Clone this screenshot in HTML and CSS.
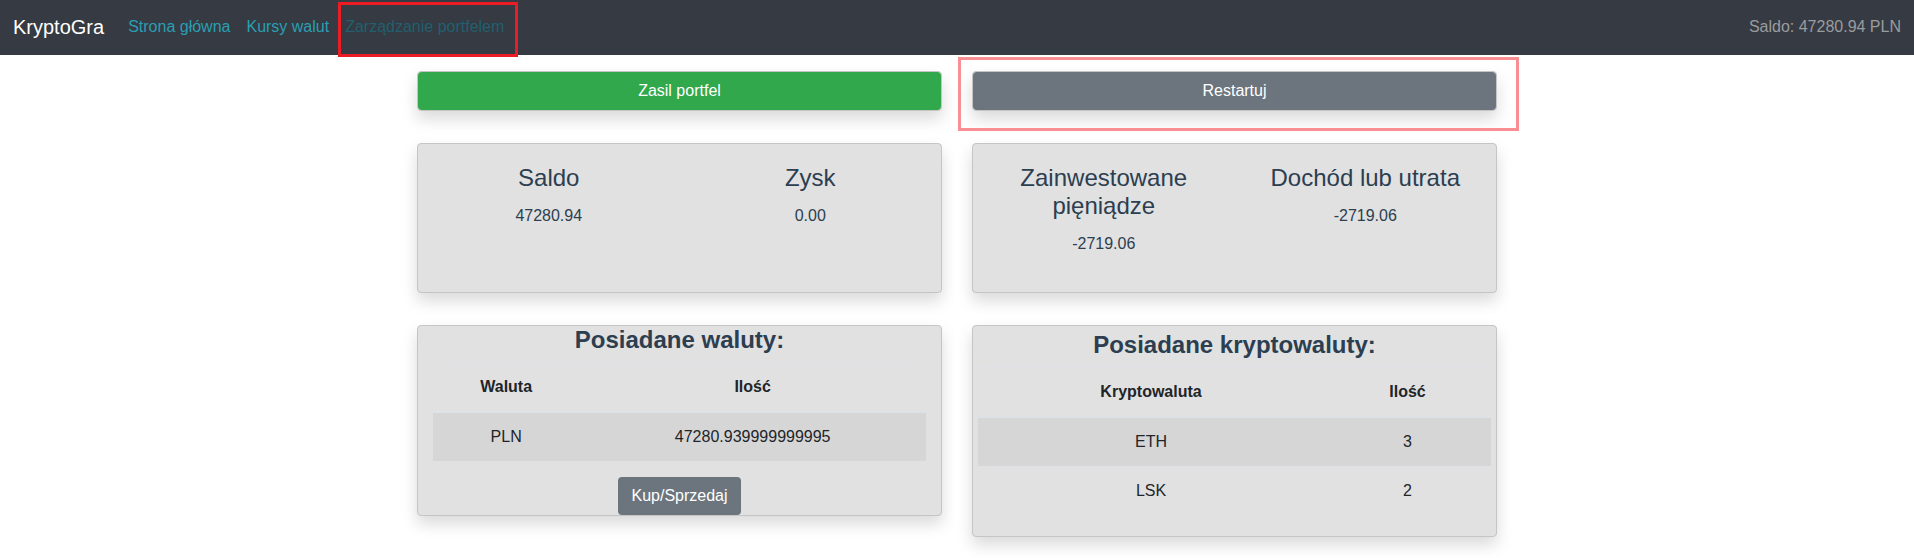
FILE: index.html
```html
<!DOCTYPE html>
<html lang="pl">
<head>
<meta charset="utf-8">
<meta name="viewport" content="width=device-width, initial-scale=1">
<title>KryptoGra</title>
<link rel="stylesheet" href="styles.css">
</head>
<body>
<nav class="navbar">
  <a class="brand" href="#">KryptoGra</a>
  <ul class="nav-list">
    <li><a class="nav-link" href="#">Strona główna</a></li>
    <li><a class="nav-link" href="#">Kursy walut</a></li>
    <li><a class="nav-link nav-link-active marked-nav" href="#" aria-current="page">Zarządzanie portfelem</a></li>
  </ul>
  <span class="navbar-text">Saldo: 47280.94 PLN</span>
</nav>
<main class="container">
  <div class="row">
    <div class="card"><button class="btn btn-success btn-block" type="button">Zasil portfel</button></div>
    <div class="card marked-card"><button class="btn btn-secondary btn-block" type="button">Restartuj</button></div>
  </div>
  <div class="row row-stats">
    <section class="card card-group">
      <div class="stat"><h4 class="title">Saldo</h4><p class="value">47280.94</p></div>
      <div class="stat"><h4 class="title">Zysk</h4><p class="value">0.00</p></div>
    </section>
    <section class="card card-group">
      <div class="stat"><h4 class="title">Zainwestowane pięniądze</h4><p class="value">-2719.06</p></div>
      <div class="stat"><h4 class="title">Dochód lub utrata</h4><p class="value">-2719.06</p></div>
    </section>
  </div>
  <div class="row row-top">
    <section class="card">
      <h4 class="title title-bold">Posiadane waluty:</h4>
      <div class="table-wrap">
        <table class="table">
          <thead><tr><th scope="col">Waluta</th><th scope="col">Ilość</th></tr></thead>
          <tbody><tr><td>PLN</td><td>47280.939999999995</td></tr></tbody>
        </table>
      </div>
      <div class="actions"><button class="btn btn-secondary" type="button">Kup/Sprzedaj</button></div>
    </section>
    <section class="card card-padded">
      <h4 class="title title-bold">Posiadane kryptowaluty:</h4>
      <table class="table">
        <thead><tr><th scope="col">Kryptowaluta</th><th scope="col">Ilość</th></tr></thead>
        <tbody>
          <tr><td>ETH</td><td>3</td></tr>
          <tr><td>LSK</td><td>2</td></tr>
        </tbody>
      </table>
    </section>
  </div>
</main>
</body>
</html>
```
FILE: styles.css
```css
*, *::before, *::after { box-sizing: border-box; }

body {
  min-height: 100vh;
  margin: 0;
  background: #fff;
  color: #2c3e50;
  font: 16px/24px "Liberation Sans", Arial, sans-serif;
  text-align: center;
}

.navbar {
  display: flex;
  align-items: center;
  padding: 7px 13px 8px;
  background: #363a42;
}
.brand {
  margin-right: 16px;
  color: #fff;
  font-size: 20px;
  line-height: 30px;
  text-decoration: none;
}
.nav-list {
  display: flex;
  margin: 0;
  padding: 0;
  list-style: none;
}
.nav-link {
  display: block;
  padding: 8px;
  color: #2a9fb3;
  text-decoration: none;
}
.nav-link-active { color: #20606f; }
.navbar-text {
  margin-left: auto;
  color: #9a9c9f;
}

.marked-nav, .marked-card { position: relative; }
.marked-nav::after, .marked-card::after {
  content: "";
  position: absolute;
  pointer-events: none;
}
.marked-nav::after {
  inset: -5px -6px -10px 1px;
  border: 3px solid #ec1c24;
}
.marked-card::after {
  inset: -15px -23px -21px -15px;
  border: 3px solid #f98e93;
}

.container {
  display: grid;
  gap: 32px;
  max-width: 1110px;
  margin: 0 auto;
  padding: 16px 15px 21px;
}
.row {
  display: grid;
  grid-template-columns: 1fr 1fr;
  gap: 30px;
}
.row-stats { min-height: 150px; }
.row-top { align-items: start; }

.card {
  min-width: 0;
  background: #e1e1e1;
  border: 1px solid #c5c5c5;
  border-radius: 4px;
  box-shadow: 0 8px 16px rgba(0, 0, 0, .15);
}
.card-group {
  display: grid;
  grid-template-columns: 1fr 1fr;
}
.card-padded { padding: 5px; }
.stat { padding: 20px; }

.title {
  margin: 0 0 12px;
  font-size: 24px;
  font-weight: 400;
  line-height: 28px;
}
.title-bold {
  margin-bottom: 8px;
  font-weight: 700;
}
.value { margin: 0; }

.btn {
  display: inline-block;
  padding: 7px 13px;
  border: 0;
  border-radius: 4px;
  color: #fff;
  font: inherit;
  cursor: pointer;
}
.btn-block {
  display: block;
  width: 100%;
}
.btn-success { background: #31a84c; }
.btn-secondary { background: #6c757d; }
.actions { display: flex; justify-content: center; }

.table-wrap { padding: 0 15px; }
.table {
  width: 100%;
  margin-bottom: 16px;
  border-collapse: collapse;
  color: #212529;
}
.table th, .table td {
  padding: 12px;
  border-top: 1px solid #dee2e6;
}
.table thead th { border-bottom: 2px solid #dee2e6; }
.table tbody tr:nth-child(odd) { background: #d6d6d6; }

@media (max-width: 767px) {
  .row { grid-template-columns: 1fr; }
  .navbar { flex-wrap: wrap; }
}
```
